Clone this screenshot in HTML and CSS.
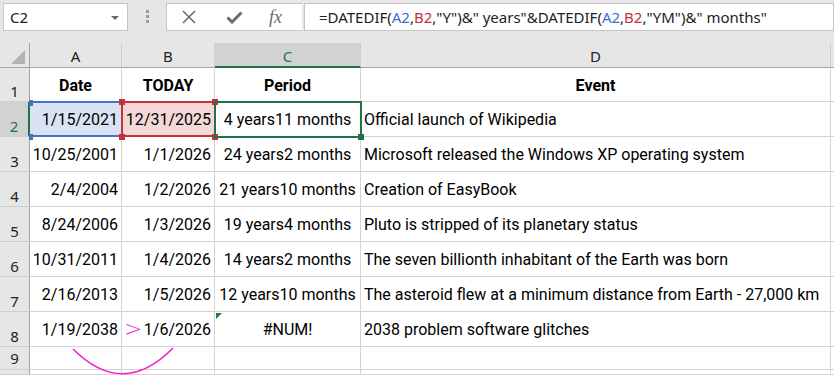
FILE: index.html
```html
<!DOCTYPE html>
<html lang="en">
<head>
    <meta charset="UTF-8">
    <title>DATEDIF</title>
    <link rel="stylesheet" href="styles.css">
</head>
<body>
    <div class="toolbar">
        <div class="name-box">
            <span>C2</span>
            <svg class="caret" width="8" height="4" viewBox="0 0 8 4"><path d="M0 0H8L4 4Z" fill="#6b6b6b"/></svg>
        </div>
        <div class="grip"><i></i><i></i><i></i></div>
        <div class="fx-buttons">
            <svg width="14" height="14" viewBox="0 0 14 14"><path d="M1 1L13 13M13 1L1 13" stroke="#6b6b6b" stroke-width="1.6"/></svg>
            <svg width="17" height="13" viewBox="0 0 17 13"><path d="M1.5 6.5L6 11L15.5 1.5" stroke="#6b6b6b" stroke-width="3" fill="none"/></svg>
            <span class="fx">fx</span>
        </div>
        <div class="formula">=DATEDIF(<span class="ref-a">A2</span>,<span class="ref-b">B2</span>,"Y")&amp;" years"&amp;DATEDIF(<span class="ref-a">A2</span>,<span class="ref-b">B2</span>,"YM")&amp;" months"</div>
    </div>

    <div class="sheet">
        <div class="grid">
            <div class="corner"><svg width="14" height="14" viewBox="0 0 14 14"><path d="M14 0V14H0Z" fill="#b4b4b4"/></svg></div>
            <div class="col-head">A</div>
            <div class="col-head">B</div>
            <div class="col-head active">C</div>
            <div class="col-head">D</div>
            <div class="col-head"></div>

            <div class="row-head">1</div>
            <div class="cell bold center">Date</div>
            <div class="cell bold center">TODAY</div>
            <div class="cell bold center">Period</div>
            <div class="cell bold center">Event</div>
            <div class="cell"></div>

            <div class="row-head active">2</div>
            <div class="cell num ref-a-fill">1/15/2021</div>
            <div class="cell num ref-b-fill">12/31/2025</div>
            <div class="cell center">4 years11 months</div>
            <div class="cell">Official launch of Wikipedia</div>
            <div class="cell"></div>

            <div class="row-head">3</div>
            <div class="cell num">10/25/2001</div>
            <div class="cell num">1/1/2026</div>
            <div class="cell center">24 years2 months</div>
            <div class="cell">Microsoft released the Windows XP operating system</div>
            <div class="cell"></div>

            <div class="row-head">4</div>
            <div class="cell num">2/4/2004</div>
            <div class="cell num">1/2/2026</div>
            <div class="cell center">21 years10 months</div>
            <div class="cell">Creation of EasyBook</div>
            <div class="cell"></div>

            <div class="row-head">5</div>
            <div class="cell num">8/24/2006</div>
            <div class="cell num">1/3/2026</div>
            <div class="cell center">19 years4 months</div>
            <div class="cell">Pluto is stripped of its planetary status</div>
            <div class="cell"></div>

            <div class="row-head">6</div>
            <div class="cell num">10/31/2011</div>
            <div class="cell num">1/4/2026</div>
            <div class="cell center">14 years2 months</div>
            <div class="cell">The seven billionth inhabitant of the Earth was born</div>
            <div class="cell"></div>

            <div class="row-head">7</div>
            <div class="cell num">2/16/2013</div>
            <div class="cell num">1/5/2026</div>
            <div class="cell center">12 years10 months</div>
            <div class="cell">The asteroid flew at a minimum distance from Earth - 27,000 km</div>
            <div class="cell"></div>

            <div class="row-head">8</div>
            <div class="cell num">1/19/2038</div>
            <div class="cell num">1/6/2026</div>
            <div class="cell center">#NUM!</div>
            <div class="cell">2038 problem software glitches</div>
            <div class="cell"></div>

            <div class="row-head short">9</div>
            <div class="cell"></div>
            <div class="cell"></div>
            <div class="cell"></div>
            <div class="cell"></div>
            <div class="cell"></div>

            <div class="row-head"></div>
            <div class="cell"></div>
            <div class="cell"></div>
            <div class="cell"></div>
            <div class="cell"></div>
            <div class="cell"></div>
        </div>

        <!-- formula reference highlights and active cell -->
        <div class="sel sel-a"></div>
        <div class="sel sel-b"></div>
        <div class="handle h-a1"></div>
        <div class="handle h-a2"></div>
        <div class="handle h-b1"></div>
        <div class="handle h-b2"></div>
        <div class="handle h-b3"></div>
        <div class="handle h-b4"></div>
        <div class="sel sel-c"></div>
        <div class="fill-handle"></div>
        <div class="err-flag"></div>

        <!-- annotation -->
        <span class="gt">&gt;</span>
        <svg class="arc" width="120" height="40" viewBox="0 0 120 40"><path d="M2 2Q52 52 102 1" stroke="#f01fcf" stroke-width="1.6" fill="none"/></svg>
    </div>
</body>
</html>
```

FILE: styles.css
```css
body {
    margin: 0;
    background-color: #e6e6e6;
    font-family: "Noto Sans", sans-serif;
    width: 834px;
    height: 375px;
    overflow: hidden;
}
.toolbar {
    display: flex;
    align-items: flex-start;
    height: 43px;
    padding: 3px 0 0 3px;
    box-sizing: border-box;
}
.name-box {
    width: 125px;
    height: 28px;
    box-sizing: border-box;
    background: #fff;
    border: 1px solid #c6c6c6;
    display: flex;
    align-items: center;
    justify-content: space-between;
    padding: 0 8px 0 6px;
    font-size: 15px;
    color: #222;
}
.caret {
    margin-top: 1px;
}
.grip {
    width: 38px;
    display: flex;
    flex-direction: column;
    align-items: center;
    gap: 2px;
    padding-top: 7px;
}
.grip i {
    display: block;
    width: 3px;
    height: 3px;
    background: #9d9d9d;
}
.fx-buttons {
    width: 136px;
    height: 28px;
    box-sizing: border-box;
    background: #fff;
    border: 1px solid #c6c6c6;
    border-right: none;
    display: flex;
    align-items: center;
    gap: 30px;
    padding-left: 15px;
}
.fx {
    font-family: "Liberation Serif", serif;
    font-style: italic;
    font-size: 18px;
    color: #6b6b6b;
    margin-left: -4px;
}
.formula {
    flex: 1;
    height: 28px;
    box-sizing: border-box;
    background: #fff;
    border: 1px solid #c6c6c6;
    margin-left: 2px;
    padding: 3px 0 0 14px;
    font-size: 15px;
    color: #222;
    white-space: nowrap;
}
.ref-a {
    color: #3a6fcf;
}
.ref-b {
    color: #c4303f;
}
.sheet {
    position: relative;
}
.grid {
    display: grid;
    grid-template-columns: 30px 92px 93px 146px 470px 1fr;
    grid-template-rows: 25px 34px repeat(7, 35px) 23px 5px;
    background: #fff;
}
.corner {
    background: #e6e6e6;
    border-right: 1px solid #a6a6a6;
    border-bottom: 1px solid #a6a6a6;
    display: flex;
    align-items: flex-end;
    justify-content: flex-end;
    padding: 0 4px 3px 0;
}
.col-head {
    background: #e6e6e6;
    border-right: 1px solid #cfcfcf;
    border-bottom: 1px solid #a6a6a6;
    text-align: center;
    font-size: 15px;
    line-height: 26px;
    color: #222;
}
.col-head.active {
    background: #d2d2d2;
    color: #217346;
    border-bottom: 2px solid #217346;
}
.row-head {
    background: #e6e6e6;
    border-right: 1px solid #a6a6a6;
    border-bottom: 1px solid #cfcfcf;
    font-size: 15px;
    line-height: 20px;
    color: #222;
    display: flex;
    align-items: flex-end;
    justify-content: center;
}
.row-head.short {
    align-items: center;
}
.row-head.active {
    background: #d2d2d2;
    color: #217346;
    border-right: 2px solid #217346;
}
.cell {
    border-right: 1px solid #d4d4d4;
    border-bottom: 1px solid #d4d4d4;
    font-family: Roboto, sans-serif;
    font-size: 16px;
    color: #000;
    white-space: nowrap;
    overflow: visible;
    display: flex;
    align-items: center;
    padding: 1px 3px 0;
}
.cell.bold {
    font-weight: bold;
}
.cell.center {
    justify-content: center;
}
.cell.num {
    justify-content: flex-end;
}
.ref-a-fill {
    background: #dae3f3;
}
.ref-b-fill {
    background: #f4d8d8;
}
.sel {
    position: absolute;
    box-sizing: border-box;
}
.sel-a {
    left: 30px;
    top: 58px;
    width: 92px;
    height: 36px;
    border-top: 2px solid #4472c4;
    border-bottom: 2px solid #4472c4;
}
.sel-b {
    left: 121px;
    top: 58px;
    width: 95px;
    height: 36px;
    border: 2px solid #c5323f;
}
.sel-c {
    left: 214px;
    top: 58px;
    width: 148px;
    height: 37px;
    border: 2px solid #217346;
}
.handle {
    position: absolute;
    width: 6px;
    height: 6px;
    background: #c5323f;
}
.h-a1, .h-a2 {
    width: 4px;
    background: #4472c4;
    left: 29px;
}
.h-a1 { top: 57px; }
.h-a2 { top: 91px; }
.h-b1 { left: 119px; top: 56px; }
.h-b2 { left: 119px; top: 91px; }
.h-b3 { left: 212px; top: 56px; }
.h-b4 { left: 212px; top: 91px; }
.fill-handle {
    position: absolute;
    left: 358px;
    top: 91px;
    width: 6px;
    height: 6px;
    background: #217346;
}
.err-flag {
    position: absolute;
    left: 216px;
    top: 270px;
    width: 0;
    height: 0;
    border-top: 6px solid #1e7d34;
    border-right: 6px solid transparent;
}
.gt {
    position: absolute;
    left: 124px;
    top: 271px;
    font-family: "DejaVu Sans", sans-serif;
    font-weight: 200;
    font-size: 22px;
    color: #f01fcf;
    line-height: 30px;
}
.arc {
    position: absolute;
    left: 71px;
    top: 304px;
}
```
